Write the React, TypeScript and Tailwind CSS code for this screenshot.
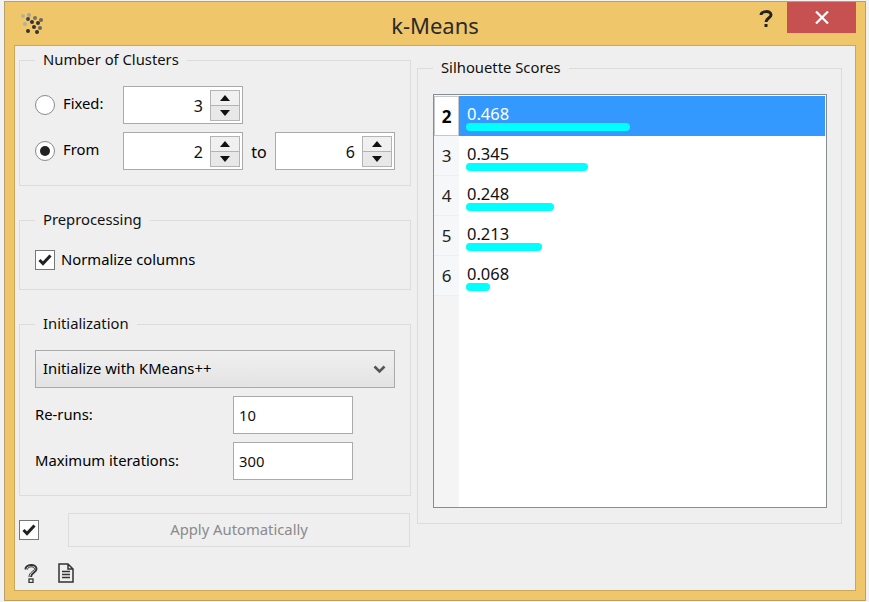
import { ReactNode } from 'react';

const scores = [
  { k: 2, value: '0.468', width: 164 },
  { k: 3, value: '0.345', width: 122 },
  { k: 4, value: '0.248', width: 88 },
  { k: 5, value: '0.213', width: 76 },
  { k: 6, value: '0.068', width: 24 },
];

function Group({ title, className, children }: { title: string; className: string; children: ReactNode }) {
  return (
    <div className={`relative border border-[#dcdcdc] ${className}`}>
      <span className="absolute left-[15px] top-[-12px] bg-[#efefef] px-[8px] leading-[20px] text-[#111]">{title}</span>
      {children}
    </div>
  );
}

function Spin({ value }: { value: number }) {
  return (
    <div className="flex h-[38px] w-[120px] items-center justify-between border border-[#aaaaaa] bg-white pl-2 pr-[2px]">
      <span className="flex-1 pr-[7px] pt-[2px] text-right text-[16px] text-[#111]">{value}</span>
      <div className="flex h-[31px] w-[30px] flex-col border border-[#b4b4b4] bg-[#e8e8e8]">
        <div className="flex flex-1 items-center justify-center border-b border-[#b4b4b4] bg-[#f0f0f0]">
          <svg width="10" height="6" viewBox="0 0 10 6"><path d="M5 0 L10 6 H0 Z" fill="#111" /></svg>
        </div>
        <div className="flex flex-1 items-center justify-center">
          <svg width="10" height="6" viewBox="0 0 10 6"><path d="M0 0 H10 L5 6 Z" fill="#111" /></svg>
        </div>
      </div>
    </div>
  );
}

function Radio({ checked }: { checked?: boolean }) {
  return (
    <span className="flex h-[20px] w-[20px] shrink-0 items-center justify-center rounded-full border border-[#8a8a8a] bg-white">
      {checked && <span className="h-[10px] w-[10px] rounded-full bg-[#222]" />}
    </span>
  );
}

function Check() {
  return (
    <span className="flex h-[20px] w-[20px] shrink-0 items-center justify-center border border-[#777] bg-white">
      <svg width="14" height="12" viewBox="0 0 14 12">
        <path d="M1.5 6 L5 9.5 L12.5 1.5" fill="none" stroke="#222" strokeWidth="3" />
      </svg>
    </span>
  );
}

function TextBox({ value }: { value: number }) {
  return (
    <div className="flex h-[38px] w-[120px] items-center border border-[#aaaaaa] bg-white pl-[5px] text-[#111]">{value}</div>
  );
}

function Logo() {
  const dots = [
    [4, 5, '#b5b0a0'], [10, 4, '#a8a496'], [16, 7, '#77736a'], [22, 9, '#6a675f'],
    [6, 13, '#b5b0a0'], [9, 8, '#444'], [13, 11, '#333'], [19, 12, '#333'],
    [15, 16, '#333'], [21, 17, '#6a675f'], [9, 20, '#333'], [18, 21, '#333'],
  ] as const;
  return (
    <svg width="24" height="26" viewBox="0 0 24 26" className="ml-[14px]">
      {dots.map(([x, y, c], i) => (
        <circle key={i} cx={x} cy={y} r="2" fill={c} />
      ))}
    </svg>
  );
}

export default function App() {
  return (
    <div className="h-[602px] w-[869px] overflow-hidden bg-[#f2f2f2] pl-[4px] pt-[1px] font-['Noto_Sans',sans-serif] text-[14.8px]">
      <div className="flex h-[600px] w-[862px] flex-col border border-[#b6a06c] bg-[#efc669]">
        {/* Title bar */}
        <div className="grid h-[43px] shrink-0 grid-cols-[1fr_auto_1fr] items-start">
          <div className="pt-[9px]"><Logo /></div>
          <div className="pt-[7px] text-[22px] leading-[32px] text-[#2a2a2a]">k-Means</div>
          <div className="flex justify-end pr-[9px]">
            <svg width="14" height="18" viewBox="0 0 14 18" className="mr-[14px] mt-[8px]">
              <path d="M2 5 C2 1 12 0 12 5 C12 8 7 8 7 12" fill="none" stroke="#222" strokeWidth="3" />
              <rect x="5.5" y="14" width="3" height="3" fill="#222" />
            </svg>
            <div className="flex h-[31px] w-[69px] items-center justify-center bg-[#c75050]">
              <svg width="14" height="13" viewBox="0 0 14 13">
                <path d="M1 0.5 L13 12.5 M13 0.5 L1 12.5" stroke="#fff" strokeWidth="2.2" />
              </svg>
            </div>
          </div>
        </div>

        {/* Client area */}
        <div className="mx-[9px] flex h-[546px] border border-[#c9a85a] bg-[#efefef] pl-[4px] pt-[14px]">
          <div className="flex w-[392px] flex-col">
            <Group title="Number of Clusters" className="flex h-[126px] flex-col gap-[8px] pl-[15px] pt-[25px]">
              <div className="flex items-center">
                <Radio />
                <span className="ml-[8px] mt-[-4px] w-[60px]">Fixed:</span>
                <Spin value={3} />
              </div>
              <div className="flex items-center">
                <Radio checked />
                <span className="ml-[8px] mt-[-4px] w-[60px]">From</span>
                <Spin value={2} />
                <span className="w-[32px] pt-[2px] text-center text-[16px]">to</span>
                <Spin value={6} />
              </div>
            </Group>

            <Group title="Preprocessing" className="mt-[34px] flex h-[70px] items-start pl-[15px] pt-[29px]">
              <div className="flex items-center gap-[6px]">
                <Check />
                <span className="mt-[-2px]">Normalize columns</span>
              </div>
            </Group>

            <Group title="Initialization" className="mt-[34px] flex h-[172px] flex-col pl-[15px] pt-[25px]">
              <div className="flex h-[38px] w-[360px] items-center justify-between border border-[#aaaaaa] bg-gradient-to-b from-[#f0f0f0] to-[#e3e3e3] pl-[7px] pr-[8px]">
                <span className="mt-[-2px]">Initialize with KMeans++</span>
                <svg width="13" height="9" viewBox="0 0 13 9">
                  <path d="M1.5 1.5 L6.5 6.5 L11.5 1.5" fill="none" stroke="#555" strokeWidth="2.6" />
                </svg>
              </div>
              <div className="mt-[8px] flex items-center">
                <span className="mt-[-2px] w-[198px]">Re-runs:</span>
                <TextBox value={10} />
              </div>
              <div className="mt-[8px] flex items-center">
                <span className="mt-[-2px] w-[198px]">Maximum iterations:</span>
                <TextBox value={300} />
              </div>
            </Group>

            <div className="mt-[17px] flex items-center">
              <Check />
              <div className="ml-[29px] flex h-[34px] w-[342px] items-center justify-center border border-[#dcdcdc] pb-[2px] text-[#8a8a8a]">
                Apply Automatically
              </div>
            </div>

            <div className="mt-[16px] flex items-start pl-[4px]">
              <svg width="16" height="20" viewBox="0 0 16 20">
                <path d="M2.5 6.5 C2 1 13.5 0 13.5 6 C13.5 9.5 8 9.5 8 14" fill="none" stroke="#333" strokeWidth="2" />
                <path d="M4.5 6.5 C4.5 3 11.5 3 11.5 6 C11.5 8 6 9 6 14" fill="none" stroke="#333" strokeWidth="1" />
                <rect x="6" y="16" width="4" height="3.5" fill="none" stroke="#333" strokeWidth="1.3" />
              </svg>
              <svg width="16" height="20" viewBox="0 0 16 20" className="ml-[19px]">
                <path d="M1 1 H10 L15 6 V19 H1 Z M10 1 V6 H15" fill="none" stroke="#333" strokeWidth="1.5" />
                <path d="M4 8.5 H12 M4 11.5 H12 M4 14.5 H12" stroke="#333" strokeWidth="1.3" />
              </svg>
            </div>
          </div>

          <div className="ml-[6px] mt-[8px]">
            <Group title="Silhouette Scores" className="h-[456px] w-[425px] pl-[15px] pr-[14px] pt-[25px]">
              <div className="flex h-[414px] border border-[#878c90] bg-white">
                <div className="flex h-full w-[25px] shrink-0 flex-col bg-[#f6f7f9]">
                  {scores.map((s, i) => (
                    <div
                      key={s.k}
                      className={
                        i === 0
                          ? 'mt-[1px] flex h-[40px] items-center justify-center border border-[#c4c8cc] bg-white pt-[2px] text-[17px] font-bold text-black'
                          : 'flex h-[40px] items-center justify-center border-b border-[#eceef2] pt-[1px] text-[17px] text-[#222]'
                      }
                    >
                      {s.k}
                    </div>
                  ))}
                  <div className="flex-1 bg-[#f4f4f4]" />
                </div>
                <div className="flex-1 pr-[1px] pt-[1px]">
                  {scores.map((s, i) => (
                    <div key={s.k} className={`h-[40px] pl-[7px] pt-[7px] ${i === 0 ? 'bg-[#3399ff] text-white' : 'text-[#111]'}`}>
                      <div className="pl-[1px] text-[16.5px] leading-[22px]">{s.value}</div>
                      <div className="mt-[-2px] h-[8px] rounded-full bg-[#00ffff]" style={{ width: s.width }} />
                    </div>
                  ))}
                </div>
              </div>
            </Group>
          </div>
        </div>
      </div>
    </div>
  );
}
